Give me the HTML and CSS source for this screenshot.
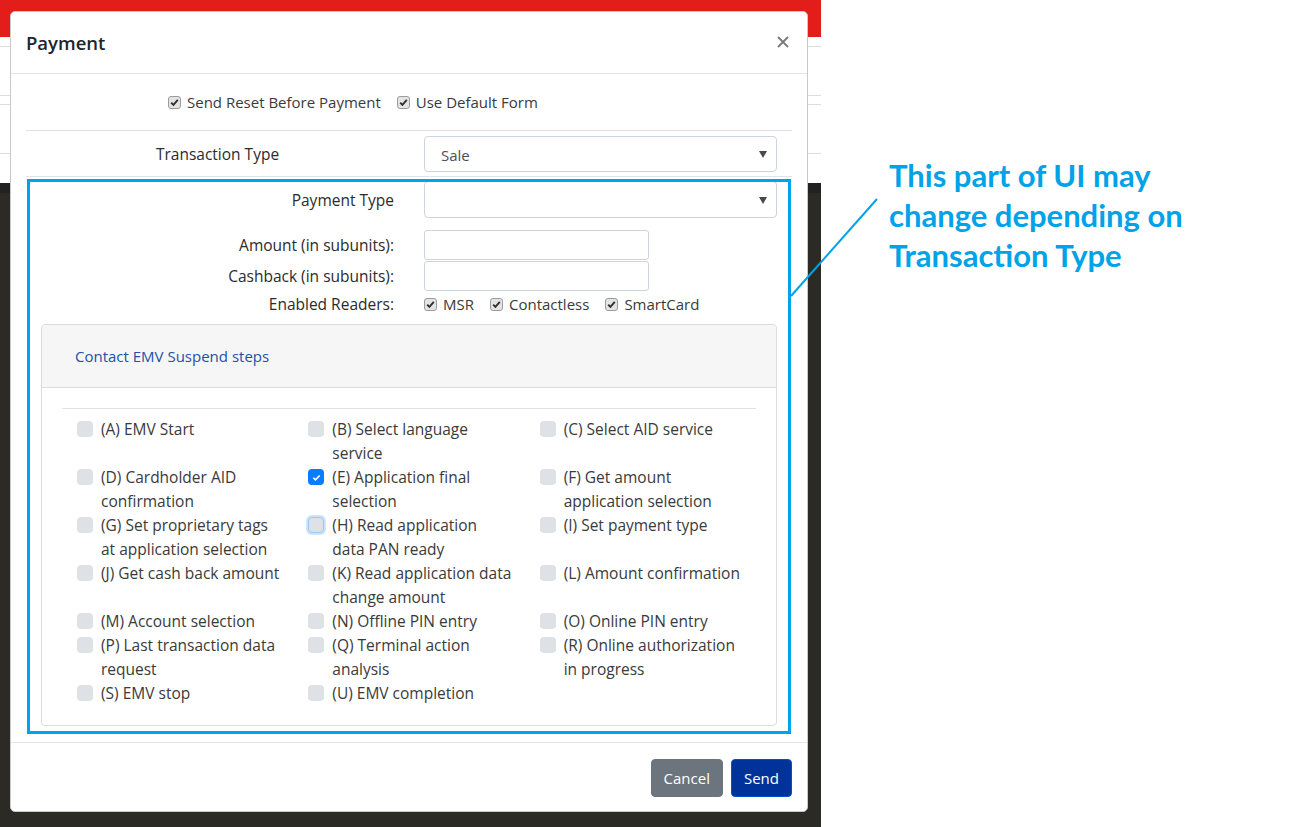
FILE: index.html
```html
<!DOCTYPE html>
<html lang="en">
<head>
<meta charset="utf-8">
<title>Payment</title>
<link rel="stylesheet" href="styles.css">
</head>
<body>
<div class="screen">
  <div class="app">
    <div class="app-topbar"></div>
    <div class="app-table">
      <div class="app-row r1"></div>
      <div class="app-row r2"></div>
      <div class="app-row r3"></div>
      <div class="app-row r4"></div>
    </div>
    <div class="app-dark"><div class="app-dark-band"></div></div>

    <div class="modal">
      <div class="modal-header">
        <h5 class="modal-title">Payment</h5>
        <svg class="close" viewBox="0 0 12 12" width="12" height="12"><path d="M1 1L11 11M11 1L1 11" stroke="#7b7b7b" stroke-width="1.9" fill="none"/></svg>
      </div>
      <div class="modal-body">
        <div class="opts">
          <label class="ncheck"><svg class="nchk" viewBox="0 0 13 13" width="13" height="13"><rect x=".5" y=".5" width="12" height="12" rx="2.5" fill="#e4e4e4" stroke="#9c9c9c"/><path d="M3.2 6.6l2.2 2.3L9.8 3.9" fill="none" stroke="#303030" stroke-width="1.9"/></svg>Send Reset Before Payment</label>
          <label class="ncheck"><svg class="nchk" viewBox="0 0 13 13" width="13" height="13"><rect x=".5" y=".5" width="12" height="12" rx="2.5" fill="#e4e4e4" stroke="#9c9c9c"/><path d="M3.2 6.6l2.2 2.3L9.8 3.9" fill="none" stroke="#303030" stroke-width="1.9"/></svg>Use Default Form</label>
        </div>
        <hr class="sep sep-top">
        <div class="frow frow-tt">
          <div class="flabel center">Transaction Type</div>
          <div class="fctl"><div class="select">Sale<span class="caret"></span></div></div>
        </div>
        <hr class="sep sep-mid">

        <div class="dyn">
          <div class="frow">
            <div class="flabel">Payment Type</div>
            <div class="fctl"><div class="select select-pt"><span class="caret"></span></div></div>
          </div>
          <div class="frow frow-amt">
            <div class="flabel">Amount (in subunits):</div>
            <div class="fctl"><div class="input"></div></div>
          </div>
          <div class="frow frow-cb">
            <div class="flabel">Cashback (in subunits):</div>
            <div class="fctl"><div class="input"></div></div>
          </div>
          <div class="frow frow-rd">
            <div class="flabel">Enabled Readers:</div>
            <div class="fctl readers">
              <label class="ncheck"><svg class="nchk" viewBox="0 0 13 13" width="13" height="13"><rect x=".5" y=".5" width="12" height="12" rx="2.5" fill="#e4e4e4" stroke="#9c9c9c"/><path d="M3.2 6.6l2.2 2.3L9.8 3.9" fill="none" stroke="#303030" stroke-width="1.9"/></svg>MSR</label>
              <label class="ncheck"><svg class="nchk" viewBox="0 0 13 13" width="13" height="13"><rect x=".5" y=".5" width="12" height="12" rx="2.5" fill="#e4e4e4" stroke="#9c9c9c"/><path d="M3.2 6.6l2.2 2.3L9.8 3.9" fill="none" stroke="#303030" stroke-width="1.9"/></svg>Contactless</label>
              <label class="ncheck"><svg class="nchk" viewBox="0 0 13 13" width="13" height="13"><rect x=".5" y=".5" width="12" height="12" rx="2.5" fill="#e4e4e4" stroke="#9c9c9c"/><path d="M3.2 6.6l2.2 2.3L9.8 3.9" fill="none" stroke="#303030" stroke-width="1.9"/></svg>SmartCard</label>
            </div>
          </div>

          <div class="card">
            <div class="card-header"><a class="card-link">Contact EMV Suspend steps</a></div>
            <div class="card-body">
              <hr class="sep sep-card">
              <div class="steps">
                <label class="step"><span class="cbox"></span><span class="stxt">(A) EMV Start</span></label>
                <label class="step"><span class="cbox"></span><span class="stxt">(B) Select language service</span></label>
                <label class="step"><span class="cbox"></span><span class="stxt">(C) Select AID service</span></label>

                <label class="step"><span class="cbox"></span><span class="stxt">(D) Cardholder AID confirmation</span></label>
                <label class="step"><span class="cbox checked"><svg viewBox="0 0 8 8" width="9" height="9"><path d="M1.2 4.2l1.9 1.9L6.8 2.2" fill="none" stroke="#fff" stroke-width="1.5"/></svg></span><span class="stxt">(E) Application final selection</span></label>
                <label class="step"><span class="cbox"></span><span class="stxt">(F) Get amount application selection</span></label>

                <label class="step"><span class="cbox"></span><span class="stxt">(G) Set proprietary tags at application selection</span></label>
                <label class="step"><span class="cbox focus"></span><span class="stxt">(H) Read application data&nbsp;PAN ready</span></label>
                <label class="step"><span class="cbox"></span><span class="stxt">(I) Set payment type</span></label>

                <label class="step"><span class="cbox"></span><span class="stxt">(J) Get cash back amount</span></label>
                <label class="step"><span class="cbox"></span><span class="stxt">(K) Read application data change amount</span></label>
                <label class="step"><span class="cbox"></span><span class="stxt">(L) Amount confirmation</span></label>

                <label class="step"><span class="cbox"></span><span class="stxt">(M) Account selection</span></label>
                <label class="step"><span class="cbox"></span><span class="stxt">(N) Offline PIN entry</span></label>
                <label class="step"><span class="cbox"></span><span class="stxt">(O) Online PIN entry</span></label>

                <label class="step"><span class="cbox"></span><span class="stxt">(P) Last transaction data request</span></label>
                <label class="step"><span class="cbox"></span><span class="stxt">(Q) Terminal action analysis</span></label>
                <label class="step"><span class="cbox"></span><span class="stxt">(R) Online authorization in progress</span></label>

                <label class="step"><span class="cbox"></span><span class="stxt">(S) EMV stop</span></label>
                <label class="step"><span class="cbox"></span><span class="stxt">(U) EMV completion</span></label>
              </div>
            </div>
          </div>
          <div class="highlight"></div>
        </div>
      </div>
      <div class="modal-footer">
        <button class="btn btn-cancel">Cancel</button>
        <button class="btn btn-send">Send</button>
      </div>
    </div>
  </div>

  <div class="note">This part of UI may<br>change depending on<br>Transaction Type</div>

  <svg class="pointer" viewBox="0 0 100 110" width="100" height="110"><path d="M6 101L92 4" stroke="#00a2e8" stroke-width="2" fill="none"/></svg>
</div>
</body>
</html>
```

FILE: styles.css
```css
* { box-sizing: border-box; }

html, body {
  margin: 0;
  padding: 0;
  background: #ffffff;
}

body {
  font-family: "Open Sans", "Noto Sans", sans-serif;
  font-size: 15px;
  line-height: 24px;
  color: #212529;
}

.screen {
  position: relative;
  display: flex;
  width: 1296px;
  height: 827px;
  overflow: hidden;
}

/* background application */
.app {
  position: relative;
  width: 821px;
  height: 827px;
  flex: none;
  display: flex;
  flex-direction: column;
  background: #fff;
}

.app-topbar {
  height: 37px;
  background: #e31e1a;
}

.app-table {
  height: 146px;
}

.app-row {
  border-bottom: 1px solid #dcdcdc;
}
.app-row.r1 { height: 10px; }
.app-row.r2 { height: 49px; }
.app-row.r3 { height: 9px; }
.app-row.r4 { height: 49px; }

.app-dark {
  flex: 1;
  background: #2b2a24;
}
.app-dark-band {
  height: 10px;
  background: #222222;
}

/* modal */
.modal {
  position: absolute;
  left: 10px;
  top: 11px;
  width: 798px;
  height: 801px;
  background: #fff;
  border: 1px solid #c9c9c9;
  border-radius: 5px;
  display: flex;
  flex-direction: column;
}

.modal-header {
  height: 62px;
  padding: 0 18px 0 15px;
  display: flex;
  align-items: center;
  justify-content: space-between;
  border-bottom: 1px solid #e3e6e9;
}

.modal-title {
  margin: 0;
  font-size: 18.5px;
  font-weight: 600;
  line-height: 30px;
  color: #212529;
}

.close {
  display: block;
  margin-top: -2px;
}

.modal-body {
  flex: 1;
  padding: 16px 15px 0;
}

.opts {
  display: flex;
  gap: 16px;
  height: 24px;
  margin-left: 142px;
}

.ncheck {
  display: inline-flex;
  align-items: center;
  gap: 6px;
  color: #3a3a3a;
  white-space: nowrap;
}

.nchk {
  display: block;
  flex: none;
}

.sep {
  border: 0;
  border-top: 1px solid #dfe2e6;
  margin: 0;
}

.sep-top { margin-top: 16px; margin-bottom: 5px; }
.sep-mid { margin-top: 4px; }

.frow {
  display: grid;
  grid-template-columns: 383px 1fr;
  align-items: center;
}

.flabel {
  text-align: right;
  padding-right: 15px;
  color: #2b2b2b;
  font-size: 15.5px;
}
.flabel.center { text-align: center; padding-right: 0; }

.fctl {
  padding: 0 15px;
}

.select {
  position: relative;
  height: 36px;
  border: 1px solid #ced4da;
  border-radius: 4px;
  padding: 6px 16px 5px;
  color: #495057;
}
.select-pt { height: 37px; }

.caret {
  position: absolute;
  right: 9px;
  top: 50%;
  margin-top: -3px;
  width: 0;
  height: 0;
  border-left: 4px solid transparent;
  border-right: 4px solid transparent;
  border-top: 7px solid #4a4a4a;
}

.dyn {
  position: relative;
  padding-top: 4px;
}

.input {
  width: 225px;
  height: 30px;
  border: 1px solid #ced4da;
  border-radius: 3px;
}

.frow-amt { margin-top: 12px; }
.frow-cb { margin-top: 1px; }
.frow-rd { margin-top: 1px; }

.readers {
  display: flex;
  gap: 16px;
}

.card {
  margin: 8px 15px 0;
  border: 1px solid #dcdcdc;
  border-radius: 4px;
}

.card-header {
  padding: 19px 33px;
  background: #f6f6f6;
  border-bottom: 1px solid #dcdcdc;
  border-radius: 4px 4px 0 0;
}

.card-link {
  color: #2150a8;
}

.card-body {
  padding: 20px 20px 20px;
}

.sep-card { margin-bottom: 8px; }

.steps {
  display: grid;
  grid-template-columns: repeat(3, minmax(0, 1fr));
}

.step {
  display: flex;
  gap: 8px;
  padding: 0 11px 0 15px;
  color: #3a3a3a;
  font-size: 15.5px;
  min-width: 0;
}

.stxt {
  flex: 1;
  min-width: 0;
}

.cbox {
  flex: none;
  width: 16px;
  height: 16px;
  margin-top: 4px;
  border-radius: 4px;
  background: #dee2e6;
  display: flex;
  align-items: center;
  justify-content: center;
}
.cbox.checked { background: #0a7cff; }
.cbox.focus {
  border: 1px solid #9cc7f5;
  box-shadow: 0 0 0 2px #cfe3fb;
}
.cbox svg { display: block; }

.highlight {
  position: absolute;
  left: 1px;
  right: 1px;
  top: 2px;
  bottom: -8px;
  border: 3px solid #00a2e8;
  pointer-events: none;
}

.modal-footer {
  height: 69px;
  border-top: 1px solid #e3e6e9;
  padding: 16px 15px 14px;
  display: flex;
  justify-content: flex-end;
  gap: 8px;
  margin-top: 14px;
}

.btn {
  height: 38px;
  padding: 0 12px;
  border-radius: 4px;
  font-family: inherit;
  font-size: 15px;
  color: #fff;
  border: 1px solid transparent;
}
.btn-cancel { background: #6c757d; border-color: #6c757d; }
.btn-send { background: #003399; border-color: #0052cc; }

/* annotation */
.note {
  margin-top: 155px;
  padding-left: 68px;
  font-family: "Lato", "Open Sans", sans-serif;
  font-weight: 700;
  font-size: 31px;
  line-height: 40px;
  color: #00a2e8;
  white-space: nowrap;
}

.pointer {
  position: absolute;
  left: 785px;
  top: 195px;
}
```
